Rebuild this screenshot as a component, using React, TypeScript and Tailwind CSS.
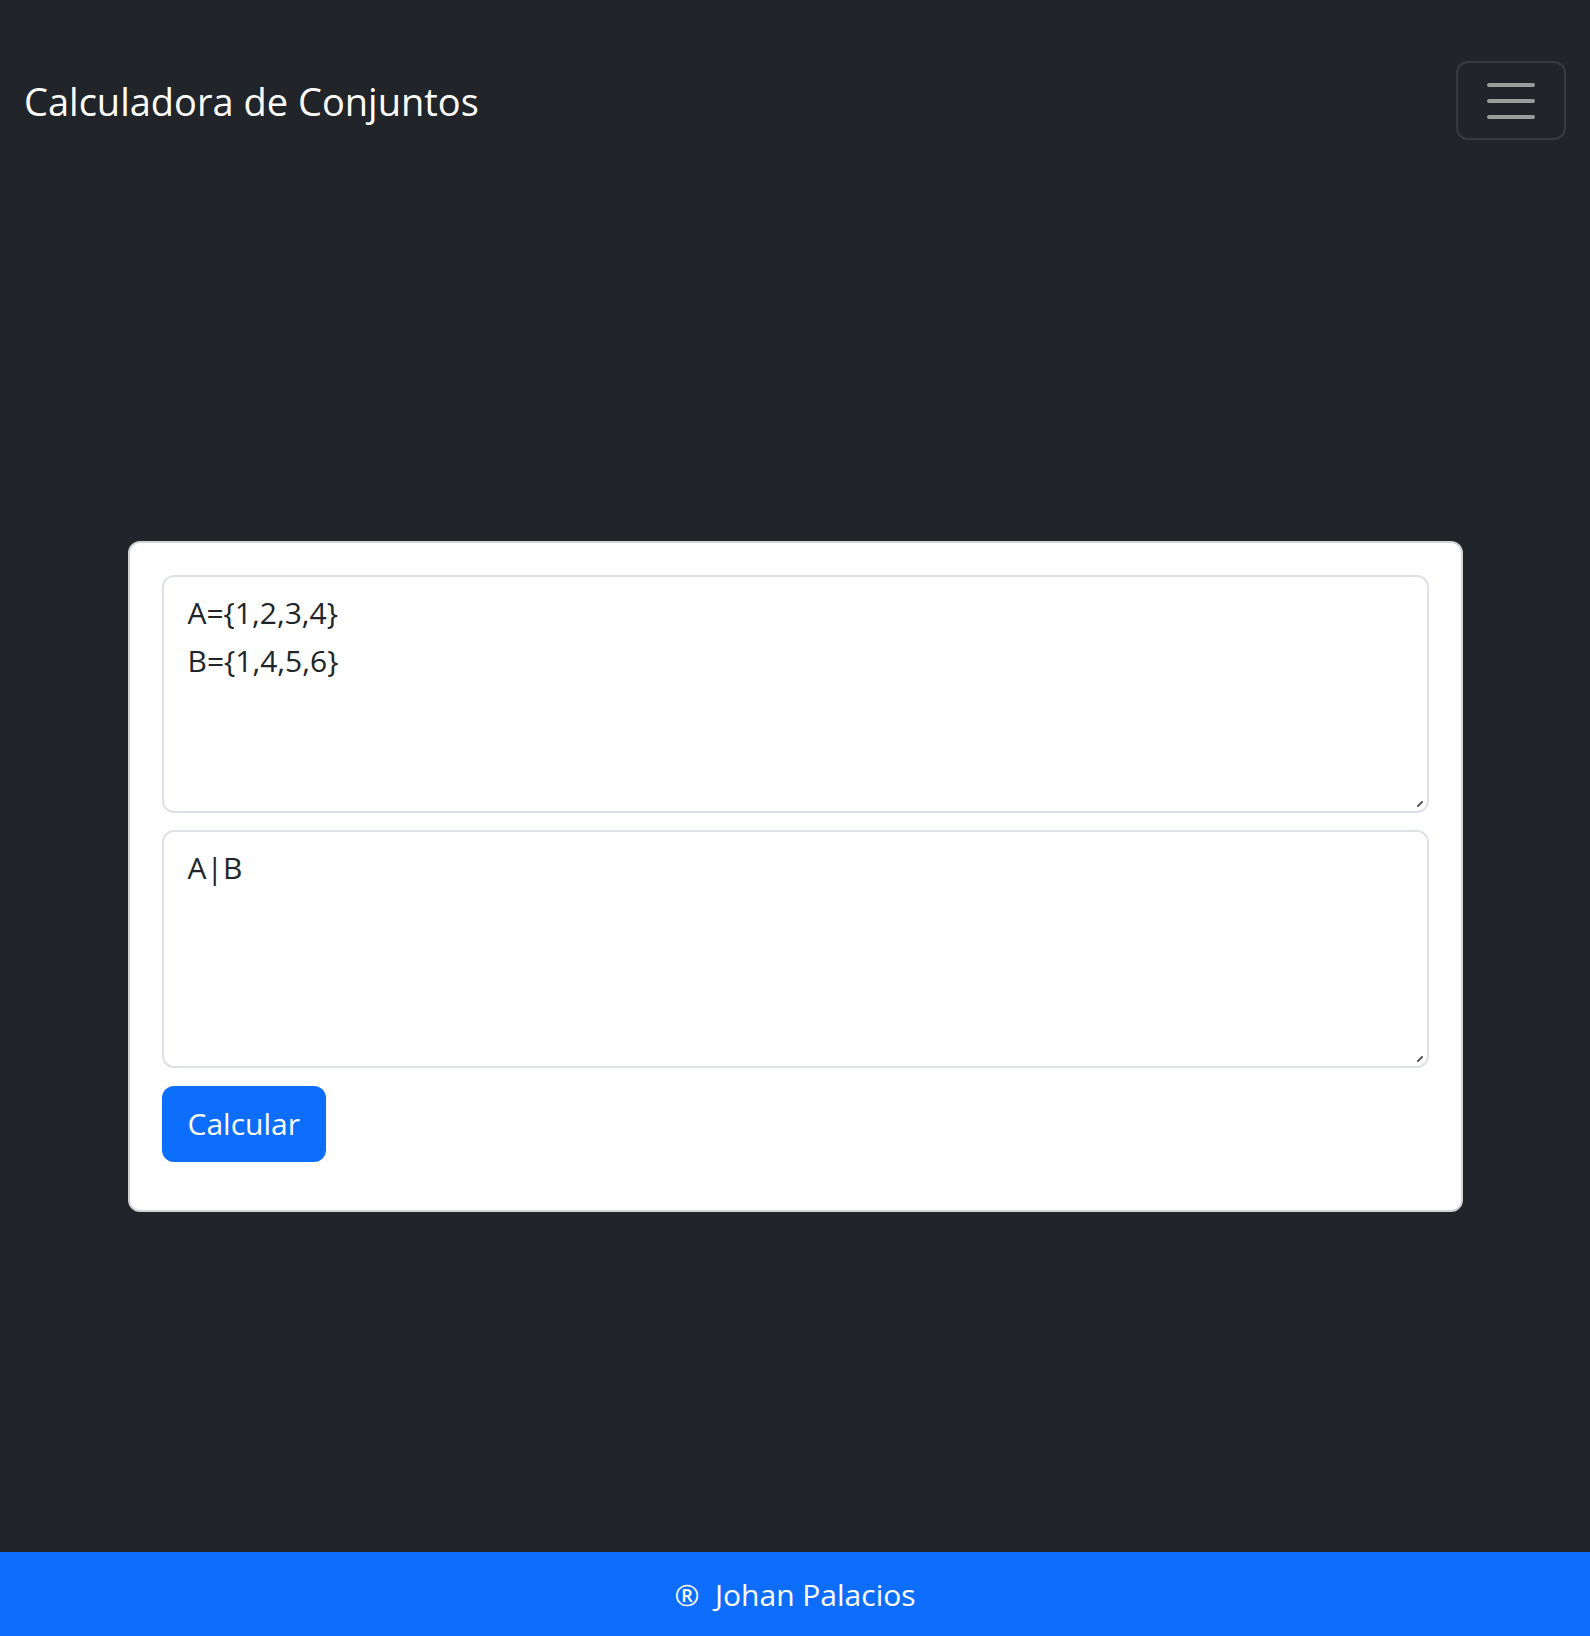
import React from 'react';

// Calculadora de Conjuntos — página oscura con tarjeta central y pie azul

const font = { fontFamily: '"Open Sans", "Noto Sans", sans-serif' };

function Grip() {
  // asa de redimensionado del textarea (esquina inferior derecha)
  return (
    <svg className="absolute right-[6px] bottom-[6px]" width="6" height="6" viewBox="0 0 6 6">
      <path d="M1 5L5 1" stroke="#555" strokeWidth="2" strokeLinecap="round" />
    </svg>
  );
}

function Field({ value, className }: { value: string; className: string }) {
  return (
    <div className={`relative ${className}`}>
      <textarea
        className="block w-full h-[238px] resize-none border-2 border-[#dee2e6] rounded-[12px] px-[24px] py-[12px] text-[30px] leading-[48px] text-[#212529] outline-none"
        style={font}
        defaultValue={value}
      />
      <Grip />
    </div>
  );
}

export default function App() {
  return (
    <div className="flex flex-col h-[1636px] bg-[#212529]" style={font}>
      <nav className="h-[201px] flex items-center justify-between pl-[24px] pr-[24px]">
        <span className="text-[38px] leading-[60px] text-white">Calculadora de Conjuntos</span>
        <button
          type="button"
          className="w-[110px] h-[79px] flex items-center justify-center rounded-[12px] border-2 border-white/10"
        >
          <svg width="48" height="40" viewBox="0 0 48 40">
            <path
              d="M2 4h44M2 20h44M2 36h44"
              stroke="rgba(255,255,255,0.55)"
              strokeWidth="4"
              strokeLinecap="round"
            />
          </svg>
        </button>
      </nav>

      <main className="flex-1 flex items-center justify-center">
        <div className="w-[1335px] bg-white border-2 border-[#d2d3d4] rounded-[12px] p-[32px]">
          <Field className="mb-[17px]" value={'A={1,2,3,4}\nB={1,4,5,6}'} />
          <Field className="mb-[18px]" value="A|B" />
          <button
            type="button"
            className="h-[76px] px-[26px] rounded-[12px] bg-[#0d6efd] text-white text-[30px] leading-[48px] mb-[16px]"
          >
            Calcular
          </button>
        </div>
      </main>

      <footer className="h-[84px] bg-[#0d6efd] flex items-center justify-center text-white text-[30px]">
        ®&nbsp; Johan Palacios
      </footer>
    </div>
  );
}
